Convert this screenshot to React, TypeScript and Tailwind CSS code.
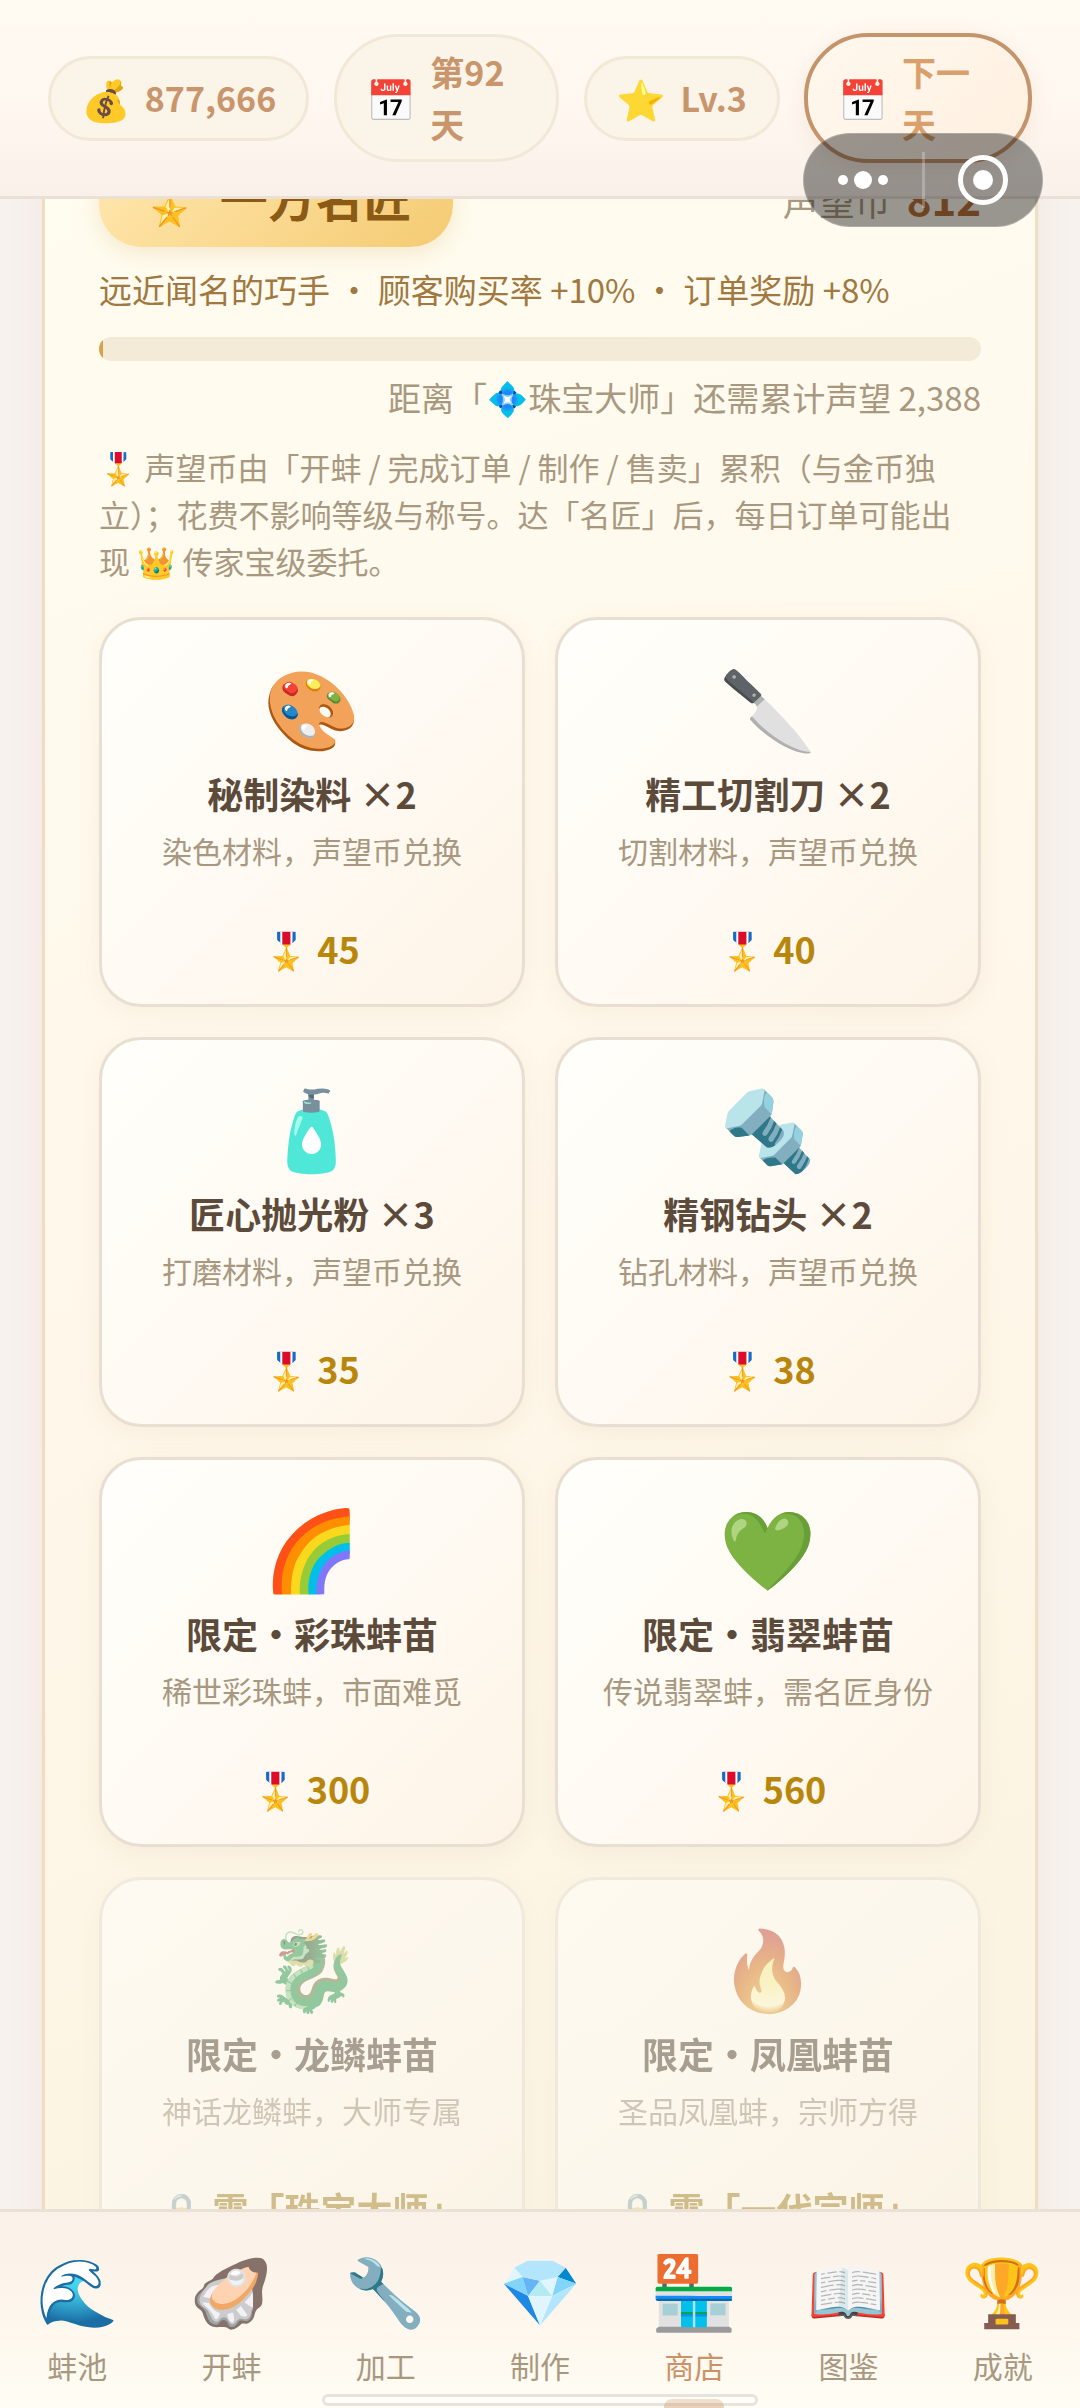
import React from "react";

type Goods = { icon: string; name: string; desc: string; badge: string; cost: string; locked?: boolean };

const goods: Goods[] = [
  { icon: "🎨", name: "秘制染料 ×2", desc: "染色材料，声望币兑换", badge: "🎖️", cost: "45" },
  { icon: "🔪", name: "精工切割刀 ×2", desc: "切割材料，声望币兑换", badge: "🎖️", cost: "40" },
  { icon: "🧴", name: "匠心抛光粉 ×3", desc: "打磨材料，声望币兑换", badge: "🎖️", cost: "35" },
  { icon: "🔩", name: "精钢钻头 ×2", desc: "钻孔材料，声望币兑换", badge: "🎖️", cost: "38" },
  { icon: "🌈", name: "限定·彩珠蚌苗", desc: "稀世彩珠蚌，市面难觅", badge: "🎖️", cost: "300" },
  { icon: "💚", name: "限定·翡翠蚌苗", desc: "传说翡翠蚌，需名匠身份", badge: "🎖️", cost: "560" },
  { icon: "🐉", name: "限定·龙鳞蚌苗", desc: "神话龙鳞蚌，大师专属", badge: "🔒", cost: "需「珠宝大师」", locked: true },
  { icon: "🔥", name: "限定·凤凰蚌苗", desc: "圣品凤凰蚌，宗师方得", badge: "🔒", cost: "需「一代宗师」", locked: true },
];

const tabs = [
  { icon: "🌊", label: "蚌池" },
  { icon: "🦪", label: "开蚌" },
  { icon: "🔧", label: "加工" },
  { icon: "💎", label: "制作" },
  { icon: "🏪", label: "商店", active: true },
  { icon: "📖", label: "图鉴" },
  { icon: "🏆", label: "成就" },
];

function Stat({ icon, text, wrap }: { icon: string; text: string; wrap?: boolean }) {
  return (
    <div className="flex items-center gap-[14px] rounded-[64px] border-3 border-[#f2e8d8] bg-[#fbf4e8] px-[30px] py-[9px] text-[#c8956c]">
      <span className="text-[40px] leading-[61px]">{icon}</span>
      <span className={wrap ? "w-24 text-[34px] leading-[52px] font-bold" : "text-[34px] leading-[52px] font-bold"}>{text}</span>
    </div>
  );
}

function GoodsCard({ item }: { item: Goods }) {
  return (
    <button
      type="button"
      disabled={item.locked}
      className="flex flex-col items-center rounded-[42px] border-3 border-[#e8ded1] bg-linear-135 from-[#fffffb] via-[#fffaf3] to-[#fdf4e6] pt-[42px] pb-8 shadow-[0_6px_24px_rgba(160,130,80,0.08)] disabled:opacity-50 disabled:grayscale-[0.35]"
    >
      <span className="text-[78px] leading-[84px]">{item.icon}</span>
      <span className="mt-[23px] text-4xl leading-[48px] font-bold text-[#5c4a3a]">{item.name}</span>
      <span className="mt-[11px] text-3xl leading-[44px] text-[#a89880]">{item.desc}</span>
      <span className="mt-[52px] text-4xl leading-[48px] font-bold whitespace-nowrap text-[#b8860b]">
        {item.badge} {item.cost}
      </span>
    </button>
  );
}

export default function App() {
  return (
    <div className="relative flex h-screen flex-col overflow-hidden bg-[#f8f2ee] font-['Noto_Sans_CJK_SC','Noto_Color_Emoji',sans-serif]">
      <header className="flex items-center justify-between border-b-3 border-[#ebe0d6] bg-linear-to-b from-[#fffaf2] via-[#fff8f1] to-[#f9f1e9] px-12 py-[33px]">
        <Stat icon="💰" text="877,666" />
        <Stat icon="📅" text="第92天" wrap />
        <Stat icon="⭐" text="Lv.3" />
        <button
          type="button"
          className="flex items-center gap-[14px] rounded-[64px] border-4 border-[#c4956c] bg-linear-135 from-[#fff8ee] to-[#fff0e0] px-[30px] py-[9px] text-left text-[#d9a06c] shadow-[0_4px_20px_rgba(200,150,100,0.15)]"
        >
          <span className="text-[40px] leading-[61px]">📅</span>
          <span className="w-24 text-[34px] leading-[52px] font-bold">下一天</span>
        </button>
      </header>

      <main className="min-h-0 flex-1 overflow-y-auto [scrollbar-width:none]">
        <section className="mx-[42px] -mt-[99px] border-3 border-t-[#f0dcc0] border-r-[#ebe0c4] border-b-[#ebe0c4] border-l-[#f0dcc0] bg-linear-160 from-[#fffdf0] via-[#fff7ea] to-[#faf3df] px-[54px] py-[54px] shadow-[0_0_30px_rgba(190,150,130,0.12)]">
          <div className="flex items-center justify-between">
            <h2 className="flex h-[90px] items-center gap-5 rounded-[42px] bg-linear-135 from-[#ffe7ae] to-[#f5cb72] px-[41px] pb-3 text-5xl font-bold text-[#8b5a14] shadow-[0_6px_24px_rgba(200,150,60,0.2)]">
              <span>🎖️</span>
              <span>一方名匠</span>
            </h2>
            <p className="flex items-baseline gap-4 pb-2 text-4xl text-[#a89880]">
              声望币 <strong className="text-[42px] text-[#b8703a]">812</strong>
            </p>
          </div>
          <p className="mt-[18px] text-[33px] leading-[48px] text-[#a07840]">远近闻名的巧手 · 顾客购买率 +10% · 订单奖励 +8%</p>
          <div className="mt-6 h-6 overflow-hidden rounded-xl bg-[#f3ead7]">
            <div className="h-full w-1 bg-[#dba24c]" />
          </div>
          <p className="mt-3 text-right text-[33px] leading-[48px] text-[#a89880]">距离「💠珠宝大师」还需累计声望 2,388</p>
          <p className="mt-[22px] text-[31px] leading-[47px] text-[#a89880]">
            🎖️ 声望币由「开蚌 / 完成订单 / 制作 / 售卖」累积（与金币独立）；花费不影响等级与称号。达「名匠」后，每日订单可能出现 👑 传家宝级委托。
          </p>
          <div className="mt-[33px] grid grid-cols-2 gap-[30px]">
            {goods.map((g) => (
              <GoodsCard key={g.name} item={g} />
            ))}
          </div>
        </section>
      </main>

      <nav className="relative grid grid-cols-7 border-t-3 border-[#ebe0d6] bg-linear-to-b from-[#faf1e8] via-[#fdf6ec] to-[#fffdf4]">
        {tabs.map((t) => (
          <a key={t.label} href="#" className="flex h-[196px] flex-col items-center pt-[33px]">
            <span className={t.active ? "text-[72px] leading-[84px]" : "text-[66px] leading-[84px]"}>{t.icon}</span>
            <span className={t.active ? "mt-[14px] text-3xl leading-[44px] text-[#cb9266]" : "mt-[14px] text-3xl leading-[44px] text-[#a89880]"}>{t.label}</span>
            {t.active && <span className="mt-3 h-[9px] w-15 rounded-t-lg bg-[#ecd2b5]" />}
          </a>
        ))}
        <div className="absolute bottom-0.5 left-1/2 h-3 w-[436px] -translate-x-1/2 rounded-full border-3 border-black/10 bg-white/30" />
      </nav>

      <div className="absolute top-[133px] right-[37px] flex h-[94px] w-60 items-center rounded-full border border-white/20 bg-black/40">
        <button type="button" aria-label="更多" className="flex flex-1 items-center justify-center gap-1.5">
          <span className="size-2.5 rounded-full bg-white" />
          <span className="size-[18px] rounded-full bg-white" />
          <span className="size-2.5 rounded-full bg-white" />
        </button>
        <span className="h-14 w-[3px] bg-white/25" />
        <button type="button" aria-label="关闭" className="flex flex-1 items-center justify-center">
          <span className="flex size-[50px] items-center justify-center rounded-full border-5 border-white">
            <span className="size-5 rounded-full bg-white" />
          </span>
        </button>
      </div>
    </div>
  );
}
